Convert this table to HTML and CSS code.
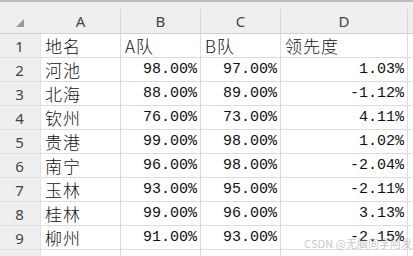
FILE: index.html
```html
<!DOCTYPE html>
<html lang="zh">
<head>
<meta charset="utf-8">
<link rel="stylesheet" href="styles.css">
</head>
<body>
<div class="topbar"></div>
<div class="colhead">
  <div class="corner"><span class="tri"></span></div>
  <div class="ch">A</div><div class="ch">B</div><div class="ch">C</div><div class="ch">D</div><div class="ch rest"></div>
</div>
<div class="grid">
  <div class="rh">1</div><div class="c t">地名</div><div class="c t">A队</div><div class="c t">B队</div><div class="c t">领先度</div><div class="c e"></div>
  <div class="rh">2</div><div class="c t">河池</div><div class="c n">98.00%</div><div class="c n">97.00%</div><div class="c n">1.03%</div><div class="c e"></div>
  <div class="rh">3</div><div class="c t">北海</div><div class="c n">88.00%</div><div class="c n">89.00%</div><div class="c n">-1.12%</div><div class="c e"></div>
  <div class="rh">4</div><div class="c t">钦州</div><div class="c n">76.00%</div><div class="c n">73.00%</div><div class="c n">4.11%</div><div class="c e"></div>
  <div class="rh">5</div><div class="c t">贵港</div><div class="c n">99.00%</div><div class="c n">98.00%</div><div class="c n">1.02%</div><div class="c e"></div>
  <div class="rh">6</div><div class="c t">南宁</div><div class="c n">96.00%</div><div class="c n">98.00%</div><div class="c n">-2.04%</div><div class="c e"></div>
  <div class="rh">7</div><div class="c t">玉林</div><div class="c n">93.00%</div><div class="c n">95.00%</div><div class="c n">-2.11%</div><div class="c e"></div>
  <div class="rh">8</div><div class="c t">桂林</div><div class="c n">99.00%</div><div class="c n">96.00%</div><div class="c n">3.13%</div><div class="c e"></div>
  <div class="rh">9</div><div class="c t">柳州</div><div class="c n">91.00%</div><div class="c n">93.00%</div><div class="c n">-2.15%</div><div class="c e"></div>
  <div class="rh"></div><div class="c"></div><div class="c"></div><div class="c"></div><div class="c"></div><div class="c e"></div>
</div>
<div class="watermark">CSDN @无脑同学阿发</div>
</body>
</html>
```
FILE: styles.css
```css
html, body {
  margin: 0;
  padding: 0;
  width: 413px;
  height: 256px;
  overflow: hidden;
  background: #ffffff;
}
body {
  position: relative;
  font-family: "Noto Sans", sans-serif;
}
.topbar {
  height: 2px;
  background: #bcbcbc;
}
.colhead {
  display: grid;
  grid-template-columns: 41px 80px 80px 80px 127px 1fr;
  background: #efefef;
  padding-top: 7px;
  border-bottom: 1px solid #d2d2d2;
}
.corner {
  height: 24px;
  position: relative;
}
.tri {
  position: absolute;
  left: 16px;
  top: 10px;
  width: 0;
  height: 0;
  border-left: 8px solid transparent;
  border-bottom: 8px solid #9a9a9a;
}
.ch {
  height: 24px;
  box-sizing: border-box;
  border-right: 1px solid #d8d8d8;
  display: flex;
  align-items: center;
  justify-content: center;
  font-size: 15px;
  color: #444444;
  line-height: 24px;
}
.ch.rest {
  border-right: none;
}
.grid {
  display: grid;
  grid-template-columns: 41px 80px 80px 80px 127px 1fr;
  grid-auto-rows: 24px;
}
.rh {
  background: #efefef;
  box-sizing: border-box;
  border-bottom: 1px solid #dcdcdc;
  border-right: 1px solid #e2e2e2;
  display: flex;
  align-items: center;
  justify-content: center;
  font-size: 15px;
  color: #444444;
  padding-right: 1px;
}
.c {
  box-sizing: border-box;
  border-right: 1px solid #dcdcdc;
  border-bottom: 1px solid #dcdcdc;
  display: flex;
  align-items: center;
  overflow: hidden;
  white-space: nowrap;
  color: #111111;
}
.c.e {
  border-right: none;
}
.t {
  font-family: "Noto Sans CJK SC", sans-serif;
  font-weight: 300;
  font-size: 17px;
  letter-spacing: 1px;
  padding-left: 4px;
  line-height: 23px;
}
.n {
  font-family: "Liberation Mono", monospace;
  font-size: 15px;
  justify-content: flex-end;
  padding-right: 3px;
  padding-top: 1px;
  line-height: 22px;
}
.watermark {
  position: absolute;
  right: 1px;
  top: 236px;
  font-family: "Noto Sans CJK SC", sans-serif;
  font-size: 11px;
  line-height: 14px;
  color: rgba(150, 150, 150, 0.55);
  white-space: nowrap;
}
```
